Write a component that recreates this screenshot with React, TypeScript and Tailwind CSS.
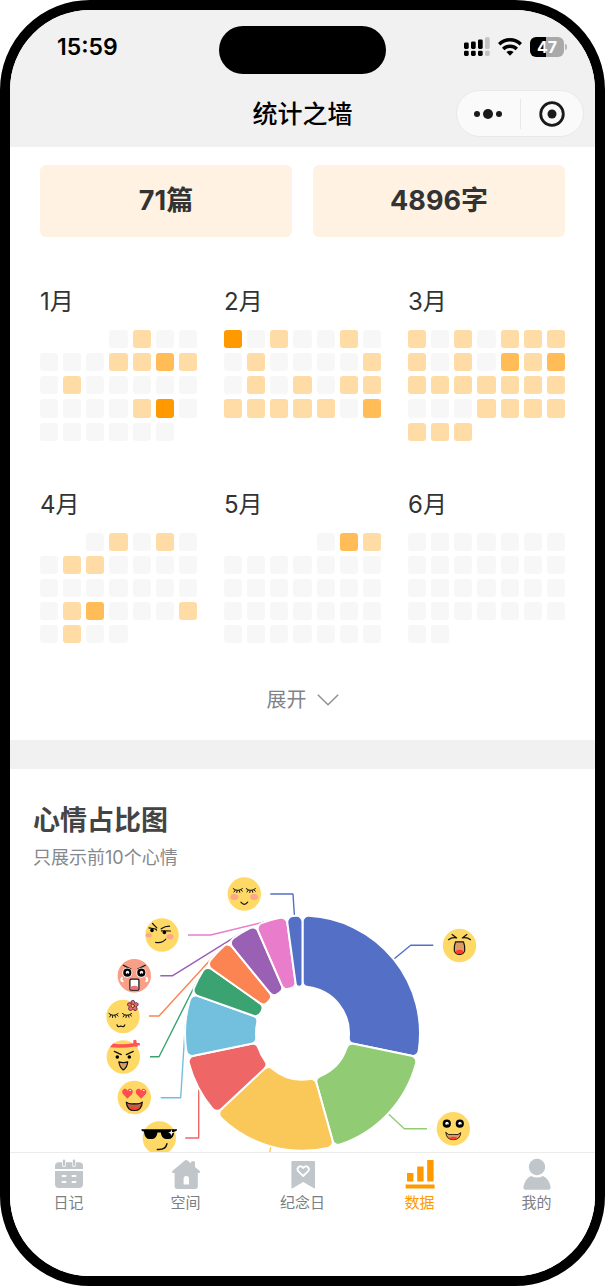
import type { ReactNode } from "react";
import clsx from "clsx";

interface Month {
  name: string;
  offset: number;
  days: string;
}

interface Slice {
  value: number;
  color: string;
  line: string;
}

// one digit per day, 0 = nothing written, 3 = most entries
const months: Month[] = [
  { name: "1月", offset: 3, days: "0100" + "0001121" + "0100000" + "0000130" + "000000" },
  { name: "2月", offset: 0, days: "3010010" + "0100001" + "0101011" + "1111102" },
  { name: "3月", offset: 0, days: "1010111" + "1010212" + "1111111" + "0001111" + "111" },
  { name: "4月", offset: 2, days: "01010" + "0110000" + "0000000" + "0120001" + "0100" },
  { name: "5月", offset: 4, days: "021" + "0000000" + "0000000" + "0000000" + "0000000" },
  { name: "6月", offset: 0, days: "0000000" + "0000000" + "0000000" + "0000000" + "00" },
];

const levelClass = ["bg-[#f7f7f7]", "bg-[#ffdba6]", "bg-[#ffbc57]", "bg-[#ff9900]"];

const slices: Slice[] = [
  { value: 13, color: "#5470c6", line: "394,959 410.7,945.3 433.3,945.3" },
  { value: 8, color: "#91cc75", line: "388,1113.5 404.3,1128.7 427,1128.7" },
  { value: 8, color: "#fac858", line: "271,1146 267,1166 250,1178" },
  { value: 4, color: "#ee6666", line: "198.7,1086 198.7,1138 185.3,1138" },
  { value: 4, color: "#73c0de", line: "185.3,1025 180.7,1097.7 160.7,1097.7" },
  { value: 2, color: "#3ba272", line: "198.2,979 159,1056.7 150,1056.7" },
  { value: 2, color: "#fc8452", line: "216.6,953 159,1016 149,1016" },
  { value: 2, color: "#9a60b4", line: "241.5,932.8 172.7,975.7 160.3,975.7" },
  { value: 2, color: "#ea7ccc", line: "270.7,920.5 210.7,935 188,935" },
  { value: 1, color: "#5470c6", line: "294.5,917 293,894 270.3,894" },
];

const CX = 302.5;
const CY = 1033.2;
const OUTER = 117.5;
const INNER = 46.5;
const CORNER = 6;

function point(radius: number, angle: number) {
  return `${CX + radius * Math.sin(angle)} ${CY - radius * Math.cos(angle)}`;
}

// ring sector with rounded corners, angles are clockwise from the top
function sectorPath(start: number, end: number) {
  const s = Math.sin((end - start) / 2);
  const co = Math.min(CORNER, (OUTER * s) / (1 + s));
  const ci = Math.min(CORNER, (INNER * s) / (1 - s));
  const ao = Math.asin(co / (OUTER - co));
  const ai = Math.asin(ci / (INNER + ci));
  const lo = Math.sqrt((OUTER - co) ** 2 - co ** 2);
  const li = Math.sqrt((INNER + ci) ** 2 - ci ** 2);
  return [
    `M ${point(lo, start)}`,
    `A ${co} ${co} 0 0 1 ${point(OUTER, start + ao)}`,
    `A ${OUTER} ${OUTER} 0 0 1 ${point(OUTER, end - ao)}`,
    `A ${co} ${co} 0 0 1 ${point(lo, end)}`,
    `L ${point(li, end)}`,
    `A ${ci} ${ci} 0 0 1 ${point(INNER, end - ai)}`,
    `A ${INNER} ${INNER} 0 0 0 ${point(INNER, start + ai)}`,
    `A ${ci} ${ci} 0 0 1 ${point(li, start)}`,
    "Z",
  ].join(" ");
}

function Face({ x, y, fill = "#ffd966", children }: { x: number; y: number; fill?: string; children: ReactNode }) {
  return (
    <g transform={`translate(${x} ${y})`} fill="none" stroke="#111" strokeWidth="1.2" strokeLinecap="round" strokeLinejoin="round">
      <circle r="16.7" fill={fill} stroke="none" />
      {children}
    </g>
  );
}

function Lashes({ x, y }: { x: number; y: number }) {
  return (
    <path
      transform={`translate(${x} ${y})`}
      strokeWidth="1"
      d="M-4.6 -1.4 Q0 2.4 4.6 -1.4 M-2.6 0.2 L-3.8 2 M-0.7 0.7 L-1 2.6 M1.4 0.6 L2 2.4 M3 -0.2 L4.6 1.2"
    />
  );
}

function RoundEye({ x, y, rim }: { x: number; y: number; rim?: boolean }) {
  return (
    <g transform={`translate(${x} ${y})`} stroke="none">
      {rim && <circle r="5" fill="#fff" />}
      <circle r="4.1" fill="#000" />
      <circle cx="0.2" cy="-0.3" r="1.7" fill="#fff" />
      <circle cx="0.4" cy="0.6" r="0.6" fill="#000" />
    </g>
  );
}

function MoodFaces() {
  return (
    <>
      <Face x={244.3} y={894}>
        <Lashes x={-6.5} y={-4} />
        <Lashes x={6.5} y={-4} />
        <ellipse cx="-10" cy="3" rx="4" ry="3" fill="#fda68a" stroke="none" />
        <ellipse cx="9.8" cy="3" rx="4" ry="3" fill="#fda68a" stroke="none" />
        <path d="M-3.4 8.2 Q0 12.4 3.4 8.2" />
      </Face>
      <Face x={162} y={935}>
        <path d="M-9.5 -11.5 L-5.2 -7.2 M-13 -7.2 L-6.5 -6 L-5.4 -4.8 M-0.8 -6.2 Q3 -8.8 7.5 -8.8 M-0.6 -4.2 L8.5 -4" />
        <circle cx="-10" cy="-4.6" r="1.8" fill="#000" stroke="none" />
        <circle cx="2.4" cy="-2.6" r="1.8" fill="#000" stroke="none" />
        <ellipse cx="-13.2" cy="0.2" rx="3" ry="2.2" fill="#fda68a" stroke="none" />
        <ellipse cx="8" cy="1.8" rx="3.5" ry="2.7" fill="#fda68a" stroke="none" />
        <path d="M-6.4 7.3 Q0 8.6 3.8 4.2" />
      </Face>
      <Face x={134.3} y={975.7} fill="#fa9f87">
        <path d="M-12.4 2 q-1.5 3 0.8 3.5 M12.2 2 q1.8 3 -0.4 3.5" stroke="#fff" strokeWidth="2" />
        <path d="M-11 -10.4 L-3.4 -6.6 M3.4 -6.6 L11 -10.4" />
        <RoundEye x={-7} y={-3} rim />
        <RoundEye x={7} y={-3} rim />
        <rect x="-4.4" y="3.4" width="9" height="11" rx="1.2" fill="#fff" />
        <path d="M-3.6 13.6 V11 Q0 9 3.8 11 V13.6 Z" fill="#e8707c" stroke="none" />
      </Face>
      <Face x={123} y={1016.5}>
        <Lashes x={-9.5} y={-1.6} />
        <Lashes x={4} y={-1.6} />
        <path d="M-6 8.4 Q-5.4 11.2 -2.2 9.4 Q1 11.2 1.8 8.4" />
        <g transform="translate(9.8 -10.6)">
          <path
            d="M-1.8 -2.5 C-3 -6.6 3 -6.6 1.8 -2.5 C5 -4.8 7.2 -0.6 3.2 0.8 C6 3.2 2.6 6.4 0 3.2 C-2.6 6.4 -6 3.2 -3.2 0.8 C-7.2 -0.6 -5 -4.8 -1.8 -2.5 Z"
            fill="#ec6576"
            stroke="#5d3038"
            strokeWidth="1"
          />
          <circle r="1.7" fill="#ffc94d" stroke="#5d3038" strokeWidth="0.9" />
        </g>
      </Face>
      <Face x={123.3} y={1057}>
        <path
          d="M-13.4 -9.7 L-10.2 -13.6 Q0 -11.8 10 -13.8 L10 -16.8 L13 -17.2 L13.4 -14 L16.4 -14 L16.6 -11.6 L14 -11.4 L14.4 -10 L11.6 -10.6 Q0 -8.6 -13.4 -9.7 Z"
          fill="#ff5252"
          stroke="none"
        />
        <path d="M-9 -5.6 L-2 -2.4 M3 -2.4 L10 -5.6" />
        <circle cx="-6" cy="0" r="1.8" fill="#000" stroke="none" />
        <circle cx="6" cy="0" r="1.8" fill="#000" stroke="none" />
        <path d="M-4.4 4.8 Q0 6.4 4.4 4.8 Q4.2 10 0 13 Q-4 10 -4.4 4.8 Z" fill="#dc9b63" />
      </Face>
      <Face x={134.3} y={1097.5}>
        <path d="M-6.8 1.2 L-11.4 -3.4 C-14 -7.6 -8.6 -10.8 -6.8 -6.8 C-5 -10.8 0.4 -7.6 -2.2 -3.4 Z" fill="#ff4d4d" stroke="none" />
        <path d="M6.8 1.2 L2.2 -3.4 C-0.4 -7.6 5 -10.8 6.8 -6.8 C8.6 -10.8 14 -7.6 11.4 -3.4 Z" fill="#ff4d4d" stroke="none" />
        <path d="M-4.4 -7 h0.6 M9.2 -7 h0.6" stroke="#fff" />
        <path d="M-8 4.6 Q-5 7 0 6.2 Q5 7 8 4.6 Q7.4 13 0 13 Q-7.4 13 -8 4.6 Z" fill="#b5654a" />
        <path d="M-5.4 10.6 Q0 7.6 5.4 10.6 Q3 12.6 0 12.6 Q-3 12.6 -5.4 10.6 Z" fill="#ff3b30" stroke="none" />
      </Face>
      <Face x={159.3} y={1138}>
        <path
          d="M-18 -8.8 H17.8 L17.2 -7 L15 -6.6 Q14.4 1 9 1 H6.6 Q2.4 1 1.4 -5.4 H-1.8 Q-2.8 1 -7 1 H-9.6 Q-14.6 1 -15.4 -6.6 L-17.4 -7 Z"
          fill="#000"
          stroke="none"
        />
        <path d="M12 -8.8 L12.8 -6 L15.4 -5.4 L12.8 -4.6 L12 -2 L11.2 -4.6 L8.8 -5.4 L11.2 -6 Z" fill="#fff" stroke="none" />
        <path d="M-2 11.4 Q6.4 12 7.6 5.8" strokeWidth="1.5" />
      </Face>
      <Face x={459.5} y={945.5}>
        <path d="M-7.4 -11 L-2.8 -7.6 Q-7.4 -8.8 -11 -5.8 M7.4 -11 L2.8 -7.6 Q7.4 -8.8 11 -5.8" />
        <path d="M-4 -3.6 H4 Q5.8 1 5.2 5.4 Q3.8 9 0 9 Q-3.8 9 -5.2 5.4 Q-5.8 1 -4 -3.6 Z" fill="#dc9b63" />
        <ellipse cx="0" cy="6.4" rx="3.6" ry="2.1" fill="#ff3b30" stroke="none" />
      </Face>
      <Face x={453.3} y={1128.7}>
        <RoundEye x={-6.5} y={-5} />
        <RoundEye x={6.5} y={-5} />
        <path d="M-7.4 4 Q-5 6.8 -1 5.8 H1 Q5 6.8 7.4 4 Q7 11 0 11 Q-7 11 -7.4 4 Z" fill="#dc9b63" strokeWidth="0.9" />
        <path d="M-4.4 9.4 Q0 6.8 4.4 9.4 Q2.4 11 0 11 Q-2.4 11 -4.4 9.4 Z" fill="#ff3b30" stroke="none" />
      </Face>
    </>
  );
}

function MoodChart() {
  const total = slices.reduce((sum, slice) => sum + slice.value, 0);
  let sum = 0;
  const sectors = slices.map((slice) => {
    const start = (sum / total) * Math.PI * 2;
    sum += slice.value;
    return { color: slice.color, d: sectorPath(start, (sum / total) * Math.PI * 2) };
  });

  return (
    <svg viewBox="10 870 585 310" className="block w-full" role="img" aria-label="心情占比图">
      {slices.map((slice, i) => (
        <polyline key={i} points={slice.line} fill="none" stroke={slice.color} strokeWidth="1.4" strokeLinejoin="bevel" />
      ))}
      {sectors.map((sector, i) => (
        <path key={i} d={sector.d} fill={sector.color} stroke="#fff" strokeWidth="2" />
      ))}
      <MoodFaces />
    </svg>
  );
}

function MonthGrid({ month }: { month: Month }) {
  return (
    <section>
      <h2 className="mb-[9px] text-[24px] leading-[38px]">{month.name}</h2>
      <div className="grid grid-cols-7 gap-[5px]">
        {Array.from({ length: month.offset }, (_, i) => (
          <span key={`empty-${i}`} />
        ))}
        {month.days.split("").map((level, i) => (
          <span key={i} className={clsx("aspect-square rounded-[3px]", levelClass[Number(level)])} />
        ))}
      </div>
    </section>
  );
}

function StatusBar() {
  return (
    <div className="grid grid-cols-[1fr_auto_1fr] px-7 pt-4">
      <span className="pl-[19px] text-[23px] leading-[42px] font-semibold text-black">15:59</span>
      <div className="h-12 w-[167px] rounded-full bg-black" />
      <div className="flex h-[42px] items-center justify-end gap-2">
        <svg width="26" height="20" viewBox="0 0 26 20" fill="#000">
          <rect x="0" y="5.5" width="4.7" height="6.5" rx="1.4" />
          <rect x="7" y="4.5" width="4.7" height="7.5" rx="1.4" />
          <rect x="14" y="2.5" width="4.7" height="9.5" rx="1.4" />
          <rect x="21" y="0.3" width="4.7" height="11.7" rx="1.4" fill="#c4c4c4" />
          <rect x="0" y="13.7" width="4.7" height="5.3" rx="1.4" />
          <rect x="7" y="13.7" width="4.7" height="5.3" rx="1.4" />
          <rect x="14" y="13.7" width="4.7" height="5.3" rx="1.4" />
          <rect x="21" y="13.7" width="4.7" height="5.3" rx="1.4" fill="#c4c4c4" />
        </svg>
        <svg width="24" height="18" viewBox="0 0 24 18" fill="none" stroke="#000" strokeWidth="3.4">
          <path d="M1.2 6.2 A15.4 15.4 0 0 1 22.8 6.2" />
          <path d="M5.2 11 A9.6 9.6 0 0 1 18.8 11" />
          <path d="M12 17.8 L8.4 14 Q12 11.4 15.6 14 Z" fill="#000" stroke="none" />
        </svg>
        <div className="flex items-center gap-px">
          <span className="h-5 w-[34px] rounded-md bg-[linear-gradient(to_right,#000_47%,#a9a9a9_47%)] text-center text-[16px] leading-5 font-bold text-white">
            47
          </span>
          <span className="h-[6px] w-[2px] rounded-r-full bg-[#b5b5b5]" />
        </div>
      </div>
    </div>
  );
}

function NavBar() {
  return (
    <div className="grid h-[73px] grid-cols-[1fr_auto_1fr] items-center px-[11px] pt-[6px]">
      <span />
      <h1 className="text-[25px] leading-9 font-medium text-black">统计之墙</h1>
      <div className="flex h-[47px] w-32 items-center justify-self-end rounded-full border border-[#e8e8e8] bg-[#fafafa]">
        <button type="button" aria-label="更多" className="flex flex-1 justify-center">
          <svg width="28" height="10" viewBox="0 0 28 10" fill="#1a1a1a">
            <circle cx="3" cy="5" r="3" />
            <circle cx="14" cy="5" r="5" />
            <circle cx="25" cy="5" r="3" />
          </svg>
        </button>
        <span className="h-[30px] w-px bg-[#e8e8e8]" />
        <button type="button" aria-label="关闭" className="flex flex-1 justify-center">
          <svg width="26" height="26" viewBox="0 0 26 26" fill="none">
            <circle cx="13" cy="13" r="11.3" stroke="#1a1a1a" strokeWidth="2.8" />
            <circle cx="13" cy="13" r="4.5" fill="#1a1a1a" />
          </svg>
        </button>
      </div>
    </div>
  );
}

const tabs = [
  {
    label: "日记",
    icon: (
      <>
        <path d="M0 9 V6 Q0 2.2 4 2.2 H24 Q28 2.2 28 6 V9 Z" />
        <path d="M0 11 H28 V24 Q28 28 24 28 H4 Q0 28 0 24 Z" />
        <path d="M9 1 V5 M19 1 V5" stroke="#fff" strokeWidth="3.8" strokeLinecap="round" />
        <path d="M9 0.6 V4.8 M19 0.6 V4.8" stroke="currentColor" strokeWidth="2.4" strokeLinecap="round" />
        <path d="M7.5 16 H10.5 M17.5 16 H20.5 M7.5 22 H10.5 M17.5 22 H20.5" stroke="#fff" strokeWidth="2" strokeLinecap="round" />
      </>
    ),
  },
  {
    label: "空间",
    icon: (
      <path
        fillRule="evenodd"
        d="M12.8 0.6 Q14.2 -0.4 15.6 0.6 L19 3.6 V2.2 Q19 1.2 20 1.2 H22 Q23 1.2 23 2.2 V7 L27.8 11 Q29 12.6 27.4 13 H25.8 V26.6 Q25.8 29 23.6 29 H4.8 Q2.6 29 2.6 26.6 V13 H0.8 Q-0.8 12.6 0.4 11 Z M11.6 24.6 H17 V18.6 Q17 16 14.3 16 Q11.6 16 11.6 18.6 Z"
      />
    ),
  },
  {
    label: "纪念日",
    icon: (
      <>
        <path d="M3.4 1 H25 Q26 1 26 2 V28 Q26 29 25 28.3 L14.2 22 L3.6 28.3 Q2.4 29 2.4 28 V2 Q2.4 1 3.4 1 Z" />
        <path d="M14.2 16 L9.2 11.2 C6.8 7.6 11.8 4 14.2 8 C16.6 4 21.6 7.6 19.2 11.2 Z" fill="none" stroke="#fff" strokeWidth="1.8" strokeLinejoin="round" />
      </>
    ),
  },
  {
    label: "数据",
    active: true,
    icon: <path d="M1 13 H7.4 V21.6 H1 Z M11.2 6.4 H17.6 V21.6 H11.2 Z M21.2 0 H27.6 V21.6 H21.2 Z M-0.4 24.4 H28.6 V28.4 H-0.4 Z" />,
  },
  {
    label: "我的",
    icon: (
      <>
        <circle cx="14" cy="7" r="8.2" />
        <path d="M8 16 Q14 19 20 16 Q26.4 19 27.6 27 Q27.8 29.8 25.6 29.8 H2.4 Q0.2 29.8 0.4 27 Q1.6 19 8 16 Z" />
      </>
    ),
  },
];

function TabBar() {
  return (
    <nav className="grid h-[124px] shrink-0 grid-cols-5 items-start border-t border-[#ebebeb] bg-white pt-[7px]">
      {tabs.map((tab) => (
        <a
          key={tab.label}
          href="#"
          aria-current={tab.active ? "page" : undefined}
          className="flex flex-col items-center gap-1"
        >
          <svg
            width="28"
            height="28"
            viewBox="0 0 28 28"
            fill="currentColor"
            className={clsx("overflow-visible", tab.active ? "text-[#ff9900]" : "text-[#c1c6ca]")}
          >
            {tab.icon}
          </svg>
          <span className={clsx("text-[15px] leading-[22px]", tab.active ? "text-[#ff9900]" : "text-[#7b7e82]")}>
            {tab.label}
          </span>
        </a>
      ))}
    </nav>
  );
}

export default function App() {
  return (
    <div className="flex h-screen flex-col overflow-hidden rounded-[90px] border-10 border-black bg-white font-['Inter','Noto_Sans_CJK_SC',sans-serif] text-[#333]">
      <header className="shrink-0 bg-[#f1f1f1]">
        <StatusBar />
        <NavBar />
      </header>

      <main className="min-h-0 flex-1 overflow-y-auto [scrollbar-width:none]">
        <div className="px-[30px] pt-[18px] pb-[25px]">
          <div className="grid grid-cols-2 gap-[21px] text-center text-[27px] leading-[72px] font-bold">
            <div className="rounded-md bg-[#fff2e2]">71篇</div>
            <div className="rounded-md bg-[#fff2e2]">4896字</div>
          </div>

          <div className="mt-[46px] grid grid-cols-3 items-start gap-x-[27px] gap-y-[45px]">
            {months.map((month) => (
              <MonthGrid key={month.name} month={month} />
            ))}
          </div>

          <button type="button" className="mx-auto mt-[42px] flex items-center gap-[10px] text-[20px] leading-[30px] text-[#808388]">
            展开
            <svg width="22" height="12" viewBox="0 0 22 12" fill="none" stroke="#909090" strokeWidth="1.5">
              <path d="M0.8 0.8 L11 10.8 L21.2 0.8" />
            </svg>
          </button>
        </div>

        <div className="h-[29px] bg-[#f1f1f1]" />

        <section className="pt-[34px]">
          <h2 className="px-[23px] text-[27px] leading-9 font-bold text-[#444]">心情占比图</h2>
          <p className="mt-[7px] px-[23px] text-[18px] leading-6 text-[#85888d]">只展示前10个心情</p>
          <MoodChart />
        </section>
      </main>

      <TabBar />
    </div>
  );
}
